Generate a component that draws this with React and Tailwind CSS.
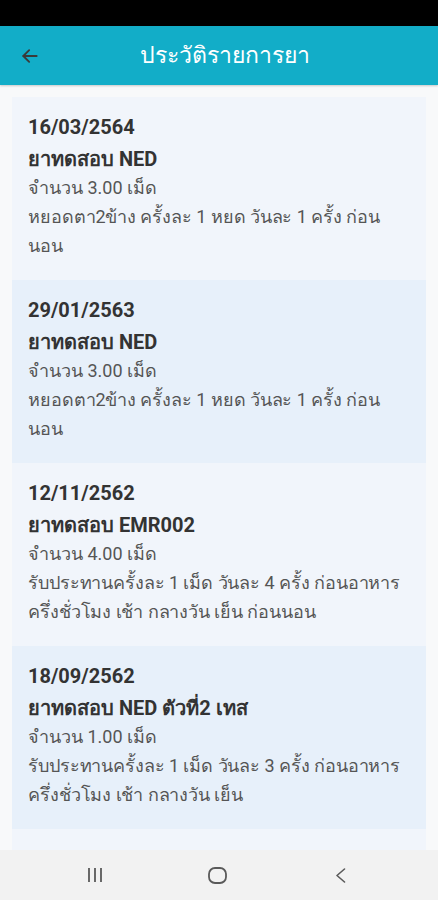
import React from "react";

const items = [
  { date: "16/03/2564", name: "ยาทดสอบ NED", qty: "จำนวน 3.00 เม็ด", ins: ["หยอดตา2ข้าง ครั้งละ 1 หยด วันละ 1 ครั้ง ก่อน", "นอน"], blue: false },
  { date: "29/01/2563", name: "ยาทดสอบ NED", qty: "จำนวน 3.00 เม็ด", ins: ["หยอดตา2ข้าง ครั้งละ 1 หยด วันละ 1 ครั้ง ก่อน", "นอน"], blue: true },
  { date: "12/11/2562", name: "ยาทดสอบ EMR002", qty: "จำนวน 4.00 เม็ด", ins: ["รับประทานครั้งละ 1 เม็ด วันละ 4 ครั้ง ก่อนอาหาร", "ครึ่งชั่วโมง เช้า กลางวัน เย็น ก่อนนอน"], blue: false },
  { date: "18/09/2562", name: "ยาทดสอบ NED ตัวที่2 เทส", qty: "จำนวน 1.00 เม็ด", ins: ["รับประทานครั้งละ 1 เม็ด วันละ 3 ครั้ง ก่อนอาหาร", "ครึ่งชั่วโมง เช้า กลางวัน เย็น"], blue: true },
  { date: "", name: "", qty: "", ins: [], blue: false },
];

function Card({ it }) {
  return (
    <div className={`h-[183px] shrink-0 px-4 pt-[16px] ${it.blue ? "bg-[#e7f0fa]" : "bg-[#f1f5fb]"}`}>
      {it.date && (
        <>
          <div className="text-[20px] font-bold leading-[28px] text-[#333]">{it.date}</div>
          <div className="mt-[4px] text-[20px] font-bold leading-[28px] text-[#333]">{it.name}</div>
          <div className="text-[18px] leading-[29px] text-[#555]">{it.qty}</div>
          {it.ins.map((l, i) => (
            <div key={i} className="whitespace-nowrap text-[18px] tracking-[-0.1px] leading-[29px] text-[#555]">{l}</div>
          ))}
        </>
      )}
    </div>
  );
}

export default function App() {
  return (
    <div className="flex h-[900px] w-[438px] flex-col overflow-hidden bg-[#f8f9fa]" style={{ fontFamily: 'Roboto, "Noto Sans", "DejaVu Sans", sans-serif' }}>
      <div className="h-[26px] shrink-0 bg-black" />
      <div className="relative flex h-[59px] shrink-0 items-center justify-center bg-[#12adc8] pl-[12px] shadow-[0_1px_2px_rgba(0,0,0,0.2)]">
        <svg className="absolute left-[20px] top-[20px]" width="20" height="20" viewBox="0 0 24 24" fill="none" stroke="#3a3a3a" strokeWidth="2.2" strokeLinecap="round" strokeLinejoin="round">
          <path d="M20 12H4" />
          <path d="M11 5l-7 7 7 7" />
        </svg>
        <div className="pt-[2px] text-[23px] text-white">ประวัติรายการยา</div>
      </div>
      <div className="flex flex-1 flex-col overflow-hidden px-[12px] pt-[12px]">
        {items.map((it, i) => (
          <Card key={i} it={it} />
        ))}
      </div>
      <div className="flex h-[50px] shrink-0 items-center bg-[#f2f2f2] pl-[87px]">
        <svg width="16" height="14" viewBox="0 0 16 14" stroke="#5a5a5a" strokeWidth="1.8">
          <path d="M2 0v14M8 0v14M14 0v14" />
        </svg>
        <svg className="ml-[105px]" width="19" height="17" viewBox="0 0 19 17" fill="none" stroke="#5a5a5a" strokeWidth="1.8">
          <rect x="1" y="1" width="17" height="15" rx="6" />
        </svg>
        <svg className="ml-[108px]" width="11" height="15" viewBox="0 0 11 15" fill="none" stroke="#5a5a5a" strokeWidth="1.6" strokeLinecap="round" strokeLinejoin="round">
          <path d="M9.5 1L2 7.5l7.5 6.5" />
        </svg>
      </div>
    </div>
  );
}
